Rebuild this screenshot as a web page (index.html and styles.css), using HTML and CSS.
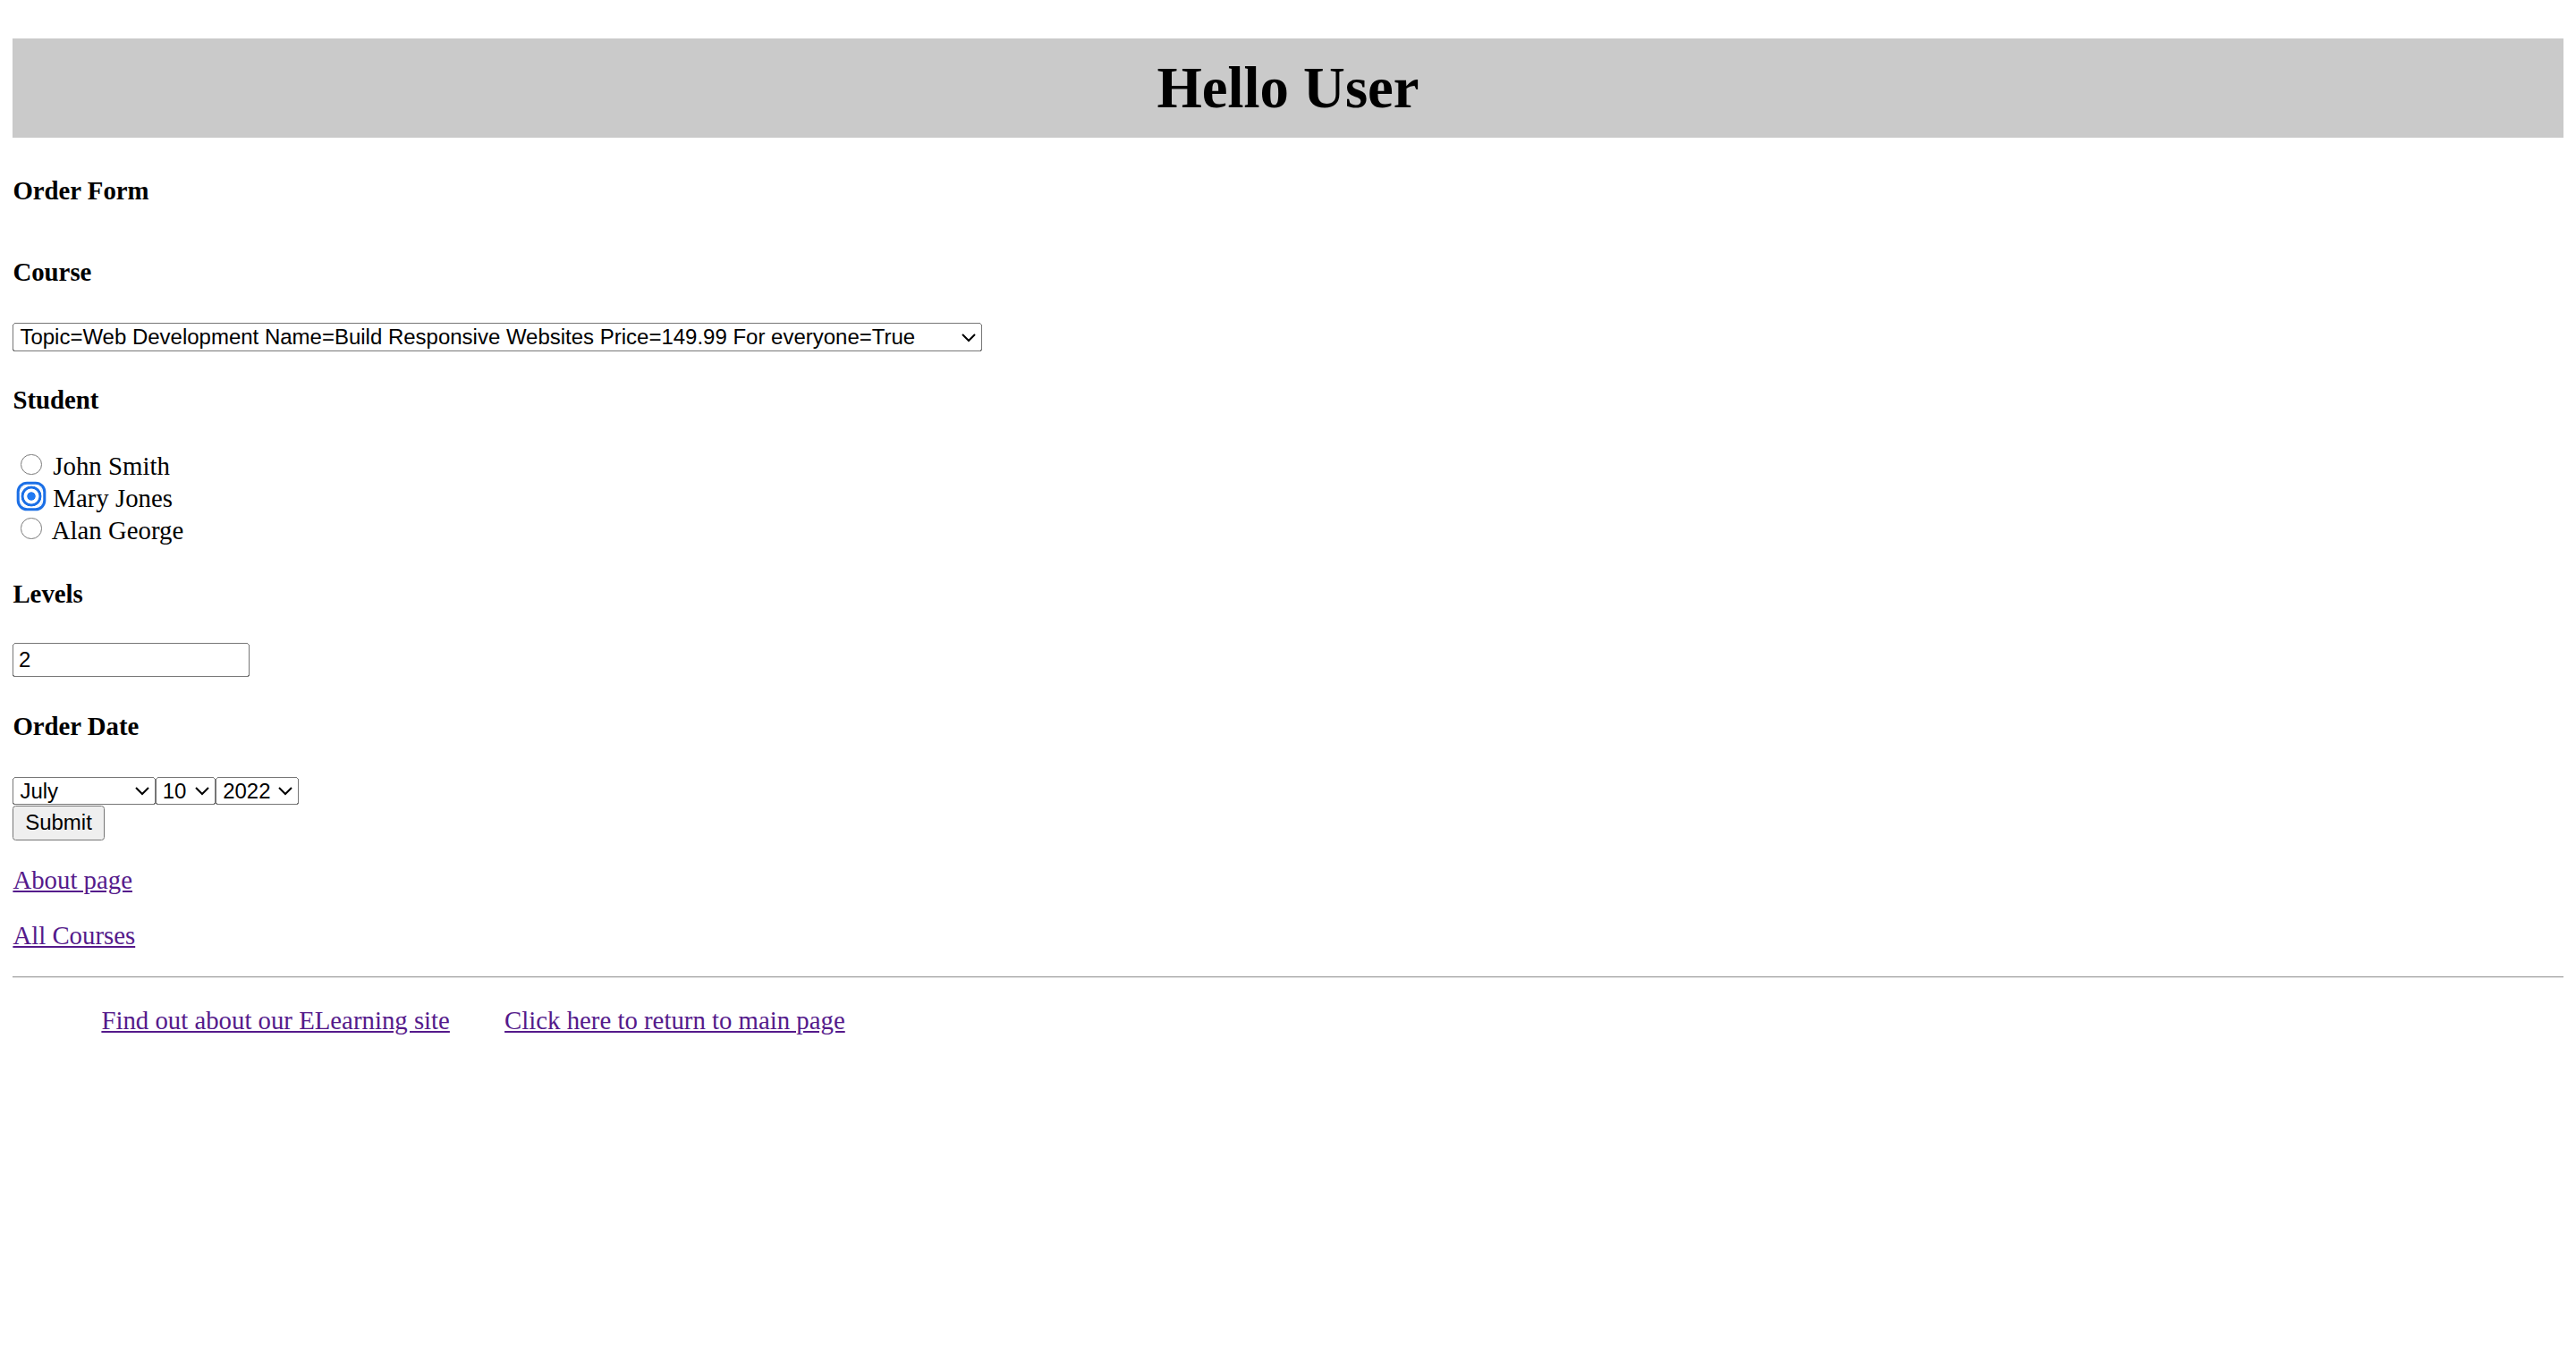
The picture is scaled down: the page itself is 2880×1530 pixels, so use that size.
FILE: index.html
```html
<!DOCTYPE html>
<html lang="en" class="page">
<head>
<meta charset="utf-8">
<title>Order Form</title>
<link rel="stylesheet" href="styles.css">
</head>
<body class="body">
<h1 class="banner">Hello User</h1>
<h4 class="form-title">Order Form</h4>
<form class="order-form" action="#">
  <h4 class="field-title">Course</h4>
  <div class="field-select">
    <select class="control select course-select" name="course">
      <option selected>Topic=Web Development Name=Build Responsive Websites Price=149.99 For everyone=True</option>
      <option>Topic=Design Name=UX Basics Price=99.99 For everyone=True</option>
      <option>Topic=Data Name=Intro to SQL Price=79.99 For everyone=False</option>
    </select>
  </div>
  <h4 class="field-title">Student</h4>
  <div class="field">
    <input type="radio" class="radio" name="student" value="john"> John Smith<br>
    <input type="radio" class="radio" name="student" value="mary" checked> Mary Jones<br>
    <input type="radio" class="radio" name="student" value="alan"> Alan George
  </div>
  <h4 class="field-title">Levels</h4>
  <div class="field-input">
    <input type="text" class="control text-input" name="levels" value="2">
  </div>
  <h4 class="field-title">Order Date</h4>
  <div class="date-row"><select class="control select date-select month-select" name="month"><option>January</option><option>February</option><option>March</option><option>April</option><option>May</option><option>June</option><option selected>July</option><option>August</option><option>September</option><option>October</option><option>November</option><option>December</option></select><select class="control select date-select day-select" name="day"><option>1</option><option>2</option><option>3</option><option>4</option><option>5</option><option>6</option><option>7</option><option>8</option><option>9</option><option selected>10</option><option>11</option><option>12</option><option>20</option><option>28</option><option>30</option><option>31</option></select><select class="control select date-select year-select" name="year"><option>2020</option><option>2021</option><option selected>2022</option><option>2023</option><option>2024</option></select></div>
  <div class="submit-row">
    <input type="submit" class="control submit" value="Submit">
  </div>
</form>
<p class="para"><a class="link" href="#">About page</a></p>
<p class="para"><a class="link" href="#">All Courses</a></p>
<hr class="divider">
<ul class="footer-links">
  <li class="footer-item"><a class="link" href="#">Find out about our ELearning site</a></li>
  <li class="footer-item"><a class="link" href="#">Click here to return to main page</a></li>
</ul>
</body>
</html>
```
FILE: styles.css
```css
.page {
  zoom: 1.8;
  background: #fff;
}

.body {
  margin: 0 8px 8px;
  font-family: "Liberation Serif", "Times New Roman", serif;
  font-size: 16px;
  color: #000;
  background: #fff;
}

.banner {
  font-size: 36px;
  font-weight: bold;
  margin: 24px 0;
  padding: 10px;
  background: #cacaca;
  text-align: center;
}

.form-title {
  font-size: 16px;
  font-weight: bold;
  margin: 21.28px 0 31.8px;
}

.order-form {
  margin: 0;
}

.field-title {
  font-size: 16px;
  font-weight: bold;
  margin: 21.28px 0;
}

.field {
  margin: 0;
}

.field-select {
  display: flex;
  align-items: flex-start;
  box-sizing: border-box;
  height: 18.7px;
  padding-top: 0.9px;
}

.field-input {
  display: flex;
  align-items: flex-start;
  height: 21.3px;
}

.date-row {
  display: flex;
  align-items: flex-start;
  box-sizing: border-box;
  height: 18.6px;
  padding-top: 1px;
}

.submit-row {
  display: flex;
  align-items: flex-start;
  padding-top: 0.2px;
}

.control {
  font-family: "Liberation Sans", Arial, sans-serif;
  font-size: 13.3333px;
  color: #000;
}

.select {
  box-sizing: border-box;
  height: 17.8px;
  margin: 0;
  flex: none;
}

.date-select {
  height: 17.6px;
}

.course-select {
  width: 602px;
}

.month-select {
  width: 88.5px;
}

.day-select {
  width: 37.5px;
}

.year-select {
  width: 51.5px;
}

.text-input {
  box-sizing: border-box;
  width: 147px;
  height: 21.3px;
  margin: 0;
  flex: none;
}

.submit {
  box-sizing: border-box;
  height: 21.5px;
  margin: 0;
  flex: none;
}

.radio {
  -webkit-appearance: none;
  appearance: none;
  box-sizing: border-box;
  width: 13px;
  height: 13px;
  margin: 3px 3px 0 5px;
  border: 1px solid #7a7a7a;
  border-radius: 50%;
  background: #fff;
  vertical-align: baseline;
}

.radio:checked {
  border: 0;
  border-radius: 4px;
  background: radial-gradient(circle, #2079f2 0 2.4px, #fff 2.8px 4.5px, #1b6fe6 4.9px 6.2px, #fff 6.5px);
  box-shadow: 0 0 0 0.7px #fff, 0 0 0 2.4px #1b6fe6;
}

.radio:focus {
  outline: none;
}

.para {
  margin: 16px 0;
}

.link {
  color: #551a8b;
  text-decoration: underline;
}

.divider {
  height: 0;
  margin: 8px 0;
  border: 0;
  border-top: 1px solid #9a9a9a;
  border-bottom: 1px solid #eeeeee;
}

.footer-links {
  list-style: none;
  margin: 17.5px 0 16px;
  padding-left: 40px;
}

.footer-item {
  display: inline;
  padding: 0 15px;
}
```
